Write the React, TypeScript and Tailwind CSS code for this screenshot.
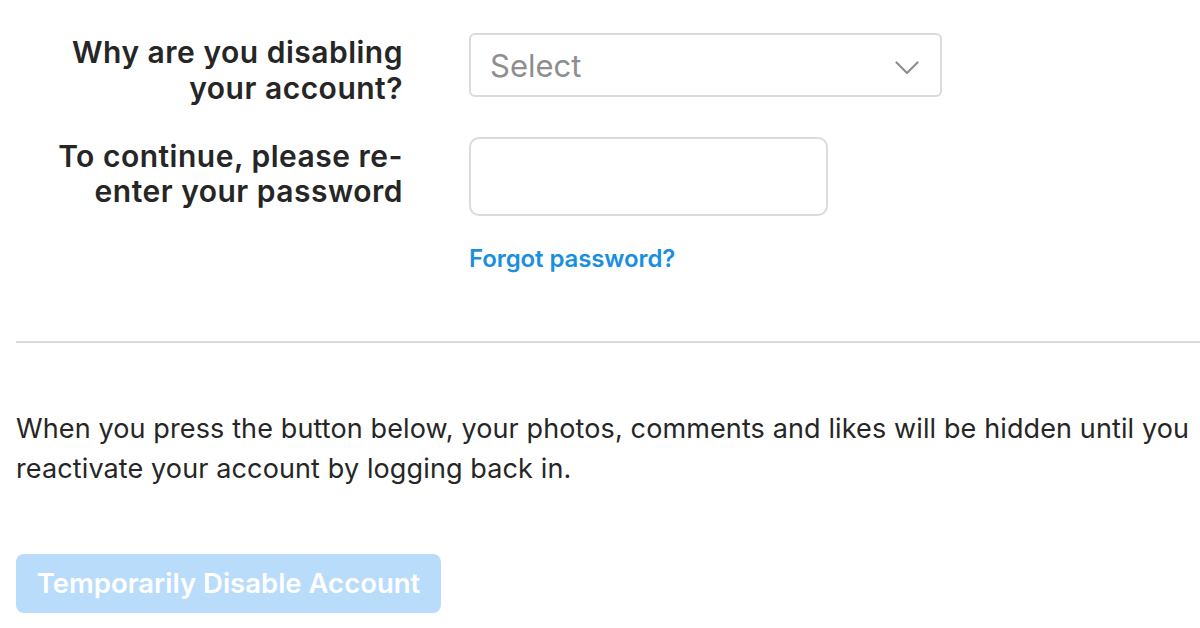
import React from "react";

export default function App() {
  return (
    <div className="w-[1200px] h-[628px] overflow-hidden bg-white font-['Inter',sans-serif] text-[#262626]">
      <div className="pl-4 pt-[33px]">
        <div className="flex h-[64px] items-start">
          <label className="w-[387px] pt-[1px] text-right text-[30px] leading-[36px] font-semibold tracking-[0.5px]">
            Why are you disabling
            <br />
            your account?
          </label>
          <div className="ml-[66px] flex h-[64px] w-[473px] shrink-0 items-center justify-between rounded-[6px] border-2 border-[#dbdbdb] pl-[19px] pr-[21px]">
            <span className="text-[31px] leading-none text-[#8e8e8e]">Select</span>
            <svg width="24" height="14" viewBox="0 0 24 14" fill="none" className="mt-[6px]">
              <path d="M1.5 1.5 L12 12 L22.5 1.5" stroke="#8e8e8e" strokeWidth="2.2" strokeLinecap="round" strokeLinejoin="round" />
            </svg>
          </div>
        </div>
        <div className="mt-[40px] flex items-start">
          <label className="w-[387px] pt-[2px] text-right text-[30px] leading-[35px] font-semibold tracking-[0.5px]">
            To continue, please re-
            <br />
            enter your password
          </label>
          <div className="ml-[66px] h-[79px] w-[359px] shrink-0 rounded-[10px] border-2 border-[#dbdbdb]" />
        </div>
        <div className="ml-[453px] mt-[29px] text-[24px] leading-[28px] font-semibold tracking-[-0.1px] text-[#1a8fe0]">
          Forgot password?
        </div>
      </div>
      <div className="ml-4 mt-[68px] h-[2px] bg-[#dbdbdb]" />
      <p className="ml-4 mt-[66px] text-[27px] leading-[40px] tracking-[0.12px] whitespace-nowrap">
        When you press the button below, your photos, comments and likes will be hidden until you
        <br />
        reactivate your account by logging back in.
      </p>
      <button className="ml-4 mt-[65px] flex h-[59px] w-[425px] items-center justify-center rounded-[8px] bg-[#b9dcfb] text-[27.5px] font-semibold text-white">
        Temporarily Disable Account
      </button>
    </div>
  );
}
